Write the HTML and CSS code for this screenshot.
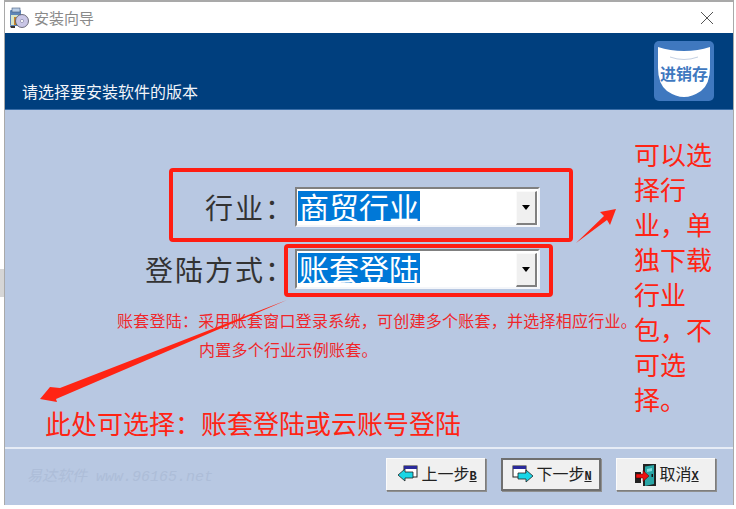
FILE: index.html
```html
<!DOCTYPE html>
<html lang="zh-CN">
<head>
<meta charset="utf-8">
<title>安装向导</title>
<link rel="stylesheet" href="styles.css">
</head>
<body>
<div class="edge-patch"></div>
<div class="window">
  <div class="titlebar">
    <svg class="app-icon" width="20" height="22" viewBox="0 0 20 22">
      <rect x="1" y="3" width="11" height="16" rx="1" fill="#5f86b8"/>
      <rect x="3" y="1" width="8" height="4" fill="#b9cde6" stroke="#44597a" stroke-width=".6"/>
      <rect x="2" y="8" width="9" height="10" fill="#d9e6c8"/>
      <rect x="5" y="10" width="2" height="8" fill="#c9862d"/>
      <rect x="7" y="12" width="2" height="6" fill="#3d9a3d"/>
      <circle cx="13" cy="14" r="6.5" fill="#c9c6e6" stroke="#4f4f5f" stroke-width=".8"/>
      <circle cx="13" cy="14" r="1.6" fill="#fff" stroke="#77779a" stroke-width=".6"/>
      <path d="M1 19h5v2H2z" fill="#333"/>
    </svg>
    <span class="title-text">安装向导</span>
    <svg class="close" width="14" height="14" viewBox="0 0 14 14"><path d="M1 1l12 12M13 1L1 13" stroke="#555" stroke-width="1" fill="none"/></svg>
  </div>
  <div class="header">
    <span class="header-text">请选择要安装软件的版本</span>
    <svg class="logo" width="60" height="60" viewBox="0 0 60 60">
      <rect width="60" height="60" rx="5" fill="#3f78bf"/>
      <path d="M4 6 Q16 10 30 10 Q44 10 56 6 V27 Q56 43 47 50 Q38 56 30 56 Q22 56 13 50 Q4 43 4 27Z" fill="#fff"/>
      <path d="M16 16 Q30 21 44 16" stroke="#c4d0e2" stroke-width="1" fill="none"/>
      <text x="30" y="39" class="logo-text" text-anchor="middle">进销存</text>
    </svg>
  </div>
  <div class="content">
    <div class="form">
      <div class="row">
        <span class="label">行业&#xFF1A;</span>
        <div class="select">
          <span class="value">商贸行业</span>
          <span class="drop"><i class="tri"></i></span>
        </div>
      </div>
      <div class="row">
        <span class="label">登陆方式&#xFF1A;</span>
        <div class="select">
          <span class="value">账套登陆</span>
          <span class="drop"><i class="tri"></i></span>
        </div>
      </div>
    </div>
    <div class="desc">
      <p class="desc-one">账套登陆&#xFF1A;采用账套窗口登录系统&#xFF0C;可创建多个账套&#xFF0C;并选择相应行业。</p>
      <p class="desc-two">内置多个行业示例账套。</p>
    </div>
    <div class="hint">此处可选择&#xFF1A;账套登陆或云账号登陆</div>
    <div class="footer">
      <span class="watermark">易达软件 www.96165.net</span>
      <div class="buttons">
        <button class="btn">
          <svg width="22" height="20" viewBox="0 0 22 20">
            <rect x="7" y="1" width="13" height="11" fill="#fff" stroke="#222"/>
            <rect x="7" y="1" width="13" height="3" fill="#2a2a9a"/>
            <path d="M1 10l7-6v3h8v6H8v3z" fill="#19d6e6" stroke="#222" stroke-width=".8"/>
          </svg>
          <span>上一步<u class="key">B</u></span>
        </button>
        <button class="btn btn-default">
          <svg width="22" height="20" viewBox="0 0 22 20">
            <rect x="1" y="1" width="13" height="11" fill="#fff" stroke="#222"/>
            <rect x="1" y="1" width="13" height="3" fill="#2a2a9a"/>
            <path d="M21 11l-7-6v3H6v6h8v3z" fill="#19d6e6" stroke="#222" stroke-width=".8"/>
          </svg>
          <span>下一步<u class="key">N</u></span>
        </button>
        <button class="btn">
          <svg width="22" height="24" viewBox="0 0 22 24">
            <rect x="8" y="1" width="13" height="22" fill="#222"/>
            <path d="M10 3.500l9-1.500v19l-9 2z" fill="#2aa6a6"/>
            <path d="M12 6l5-1v3l-5 1z" fill="#7fdcdc"/>
            <rect x="16.500" y="11" width="1.500" height="3" fill="#111"/>
            <rect x="0" y="9" width="6" height="11" fill="#222"/>
            <path d="M1 11h7V7.500l6 5.500-6 5.500V15H1z" fill="#ee1111" stroke="#400" stroke-width=".5"/>
          </svg>
          <span>取消<u class="key">X</u></span>
        </button>
      </div>
    </div>
  </div>
</div>

<div class="mark mark-one"></div>
<div class="mark mark-two"></div>
<svg class="arrows" width="736" height="509" viewBox="0 0 736 509">
  <polygon points="576,243 604,216 600,212 616,209 610,225 607,220" fill="#ff2414"/>
  <polygon points="287,300 60,388 50,387 40,399 57,402 56,399" fill="#ff2414"/>
</svg>
<div class="side-note">可以选<br>择行<br>业&#xFF0C;单<br>独下载<br>行业<br>包&#xFF0C;不<br>可选<br>择。</div>
</body>
</html>
```
FILE: styles.css
```css
* { box-sizing: border-box; }
html, body { margin: 0; padding: 0; }
body {
  position: relative;
  width: 736px;
  height: 509px;
  overflow: hidden;
  background: #fff;
  font-family: "Noto Sans CJK SC", "Liberation Sans", sans-serif;
}
.edge-patch {
  position: absolute;
  left: 0;
  top: 269px;
  width: 4px;
  height: 28px;
  background: #d6d6d6;
}
.window {
  margin-left: 4px;
  width: 730px;
  height: 505px;
  border-top: 2px solid #a9a9a9;
  border-left: 1px solid #a9a9a9;
  border-right: 1px solid #a9a9a9;
  display: flex;
  flex-direction: column;
}
.titlebar {
  height: 31px;
  flex: none;
  display: flex;
  align-items: center;
  background: #fff;
  padding: 0 19px 0 4px;
}
.title-text {
  margin-left: 5px;
  font-size: 15px;
  color: #8a8a8a;
}
.close { margin-left: auto; }
.header {
  height: 77px;
  flex: none;
  background: #003f7e;
  border-bottom: 1px solid #3a6ea8;
  display: flex;
  align-items: flex-end;
  justify-content: space-between;
  padding: 0 19px 8px 17px;
}
.header-text {
  color: #f2f5fa;
  font-size: 16px;
  line-height: 20px;
}
.logo { margin-bottom: 0; }
.logo-text {
  font-family: "Noto Sans CJK SC", sans-serif;
  font-size: 16px;
  font-weight: 700;
  fill: #3f78bf;
}
.content {
  flex: 1;
  background: #b8c8e2;
  display: flex;
  flex-direction: column;
}
.form {
  padding: 77px 0 0 0;
  display: flex;
  flex-direction: column;
  gap: 22px;
}
.row {
  display: flex;
  align-items: center;
  height: 40px;
}
.label {
  width: 290px;
  text-align: right;
  font-size: 28px;
  letter-spacing: 2px;
  line-height: 40px;
  color: #333;
  white-space: nowrap;
}
.select {
  width: 245px;
  height: 40px;
  background: #fff;
  border-top: 2px solid #808080;
  border-left: 2px solid #808080;
  border-right: 2px solid #f4f6fa;
  border-bottom: 2px solid #f4f6fa;
  padding: 2px 1px 2px 1px;
  display: flex;
  justify-content: space-between;
}
.value {
  height: 30px;
  background: #0078d7;
  color: #fff;
  font-size: 30px;
  line-height: 30px;
  padding: 0 1px;
  margin-top: 0;
  white-space: nowrap;
}
.drop {
  width: 21px;
  height: 34px;
  background: #f0f0f0;
  border-top: 1px solid #fafafa;
  border-left: 1px solid #fafafa;
  border-right: 2px solid #808080;
  border-bottom: 2px solid #808080;
  display: flex;
  align-items: center;
  justify-content: center;
}
.tri {
  width: 0;
  height: 0;
  border-left: 4px solid transparent;
  border-right: 4px solid transparent;
  border-top: 5px solid #000;
}
.desc {
  margin-top: 17px;
  color: #f0262a;
  font-size: 16px;
  letter-spacing: .25px;
  line-height: 29px;
}
.desc p { margin: 0; white-space: nowrap; }
.desc-one { padding-left: 112px; }
.desc-two { padding-left: 194px; }
.hint {
  margin-top: 40px;
  padding-left: 40px;
  font-size: 26px;
  line-height: 38px;
  color: #ff2414;
  white-space: nowrap;
}
.footer {
  margin-top: 5px;
  border-top: 2px solid #e6ecf6;
  flex: 1;
  position: relative;
  display: flex;
  align-items: flex-start;
  justify-content: space-between;
  padding: 9px 17px 0 22px;
}
.watermark {
  margin-top: 10px;
  font-family: "Liberation Mono", "Noto Sans CJK SC", monospace;
  font-style: italic;
  font-size: 15px;
  line-height: 20px;
  color: #adbdd8;
  white-space: nowrap;
}
.buttons {
  display: flex;
  gap: 15px;
}
.btn {
  width: 100px;
  height: 33px;
  padding: 0 0 0 2px;
  background: #f0f0f0;
  border: 1px solid;
  border-color: #fbfbfb #7d7d7d #7d7d7d #fbfbfb;
  box-shadow: 1px 1px 0 #8f8f8f;
  display: flex;
  align-items: center;
  justify-content: center;
  gap: 2px;
  font-family: inherit;
  font-size: 16px;
  line-height: 20px;
  color: #222;
}
.btn-default {
  border: 2px solid #6f6f6f;
}
.key {
  font-family: "Liberation Mono", monospace;
  font-size: 12px;
  font-weight: 700;
}
.mark {
  position: absolute;
  border: 4px solid #ff1d12;
  border-radius: 4px;
}
.mark-one { left: 169px; top: 168px; width: 404px; height: 74px; }
.mark-two { left: 284px; top: 244px; width: 269px; height: 53px; }
.arrows {
  position: absolute;
  left: 0;
  top: 0;
  pointer-events: none;
}
.side-note {
  position: absolute;
  left: 634px;
  top: 136px;
  font-size: 26px;
  line-height: 35px;
  color: #ff2414;
  white-space: nowrap;
}
```
